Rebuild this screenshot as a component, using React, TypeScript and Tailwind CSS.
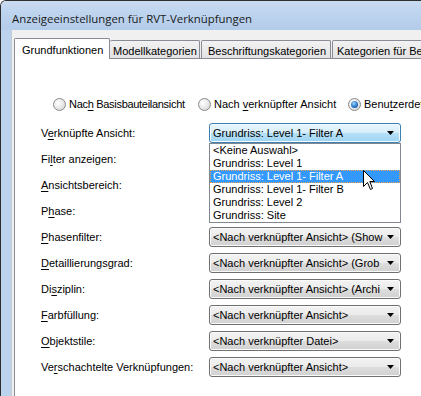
import React from 'react';

const ui = { fontFamily: '"Liberation Sans", Arial, sans-serif' };

function Mn({ children }: { children: React.ReactNode }) {
  return <span className="underline underline-offset-[2px] decoration-[1px]">{children}</span>;
}

function Arrow() {
  return (
    <svg width="7" height="4" viewBox="0 0 7 4" className="shrink-0">
      <path d="M0 0h7L3.5 4z" fill="#000" />
    </svg>
  );
}

function Radio({ checked = false }: { checked?: boolean }) {
  return (
    <div className="w-[13px] h-[13px] rounded-full border border-[#8a8a8a] bg-[radial-gradient(circle_at_35%_35%,#ffffff_0%,#e6e6e6_55%,#c8c8c8_100%)] flex items-center justify-center shrink-0">
      {checked && (
        <div className="w-[7px] h-[7px] rounded-full bg-[radial-gradient(circle_at_40%_35%,#9fd4ff_0%,#2b78c8_55%,#0d3f7a_100%)]" />
      )}
    </div>
  );
}

function Combo({ text }: { text: string }) {
  return (
    <div className="w-[192px] h-[20px] rounded-[3px] border border-[#707070] bg-[linear-gradient(#f3f3f3_0%,#ebebeb_48%,#dddddd_52%,#d0d0d0_100%)] shadow-[inset_0_0_0_1px_#fbfbfb] flex items-center pl-[3px] pr-[6px]">
      <span className="flex-1 whitespace-nowrap overflow-hidden">{text}</span>
      <Arrow />
    </div>
  );
}

const listItems = [
  '<Keine Auswahl>',
  'Grundriss: Level 1',
  'Grundriss: Level 1- Filter A',
  'Grundriss: Level 1- Filter B',
  'Grundriss: Level 2',
  'Grundriss: Site',
];

function OpenCombo() {
  return (
    <div className="relative">
      <div className="w-[192px] h-[20px] rounded-[3px] border border-[#3c7fb1] bg-[linear-gradient(#e9f6fd_0%,#d6eefb_48%,#b6e0f7_52%,#9dd4f3_100%)] shadow-[inset_0_0_0_1px_#f4fbff] flex items-center pl-[3px] pr-[6px]">
        <span className="flex-1 whitespace-nowrap overflow-hidden">Grundriss: Level 1- Filter A</span>
        <Arrow />
      </div>
      <div className="absolute left-0 top-[20px] w-[192px] border border-[#828790] bg-white z-10">
        {listItems.map((t, i) => (
          <div
            key={t}
            className={
              i === 2
                ? 'h-[13px] leading-[11px] px-[2px] bg-[#3399ff] text-white border border-dotted border-[#f0a050] whitespace-nowrap'
                : 'h-[13px] leading-[13px] px-[3px] whitespace-nowrap'
            }
          >
            {t}
          </div>
        ))}
      </div>
    </div>
  );
}

const rows: { label: React.ReactNode; value?: string; open?: boolean }[] = [
  { label: <>V<Mn>e</Mn>rknüpfte Ansicht:</>, open: true },
  { label: <>Fi<Mn>l</Mn>ter anzeigen:</> },
  { label: <><Mn>A</Mn>nsichtsbereich:</> },
  { label: <>P<Mn>h</Mn>ase:</> },
  { label: <><Mn>P</Mn>hasenfilter:</>, value: '<Nach verknüpfter Ansicht> (Show' },
  { label: <><Mn>D</Mn>etaillierungsgrad:</>, value: '<Nach verknüpfter Ansicht> (Grob' },
  { label: <>Di<Mn>s</Mn>ziplin:</>, value: '<Nach verknüpfter Ansicht> (Archi' },
  { label: <><Mn>F</Mn>arbfüllung:</>, value: '<Nach verknüpfter Ansicht>' },
  { label: <><Mn>O</Mn>bjektstile:</>, value: '<Nach verknüpfter Datei>' },
  { label: <>Ve<Mn>r</Mn>schachtelte Verknüpfungen:</>, value: '<Nach verknüpfter Ansicht>' },
];

export default function App() {
  return (
    <div className="w-[421px] h-[396px] bg-white overflow-hidden relative text-[11px] text-black" style={ui}>
      <div className="flex flex-col h-full rounded-tl-[6px] border-t border-l border-[#2e2e2e] overflow-hidden">
        {/* title bar */}
        <div className="h-[29px] shrink-0 bg-[linear-gradient(#c8dbf1_0%,#bcd3ee_50%,#b3cce9_100%)] flex items-center pl-[11px] pt-[6px]">
          <span className="text-[11.4px] text-[#1a1a1a] whitespace-nowrap" style={{ fontFamily: '"Open Sans", "Noto Sans", sans-serif' }}>
            Anzeigeeinstellungen für RVT-Verknüpfungen
          </span>
        </div>
        <div className="flex flex-1 min-h-0">
          <div className="w-[11px] shrink-0 bg-[#bcd3ee] border-r border-[#c5ccd4]" />
          <div className="flex-1 bg-[#f0f0f0] pl-[2px] pt-[7px] flex flex-col min-h-0">
            {/* tabs */}
            <div className="flex items-end h-[21px] shrink-0 relative z-10">
              <div className="w-[96px] h-[21px] -mb-px bg-white border-l border-t border-r border-[#898c95] rounded-t-[2px] pl-[7px] pt-[3px] whitespace-nowrap">
                Grundfunktionen
              </div>
              <div className="w-[90px] h-[18px] bg-[linear-gradient(#f2f2f2,#e3e3e3)] border-t border-r border-[#898c95] rounded-t-[2px] pl-[3px] pt-[2px] whitespace-nowrap">
                Modellkategorien
              </div>
              <div className="w-[130px] h-[18px] ml-px bg-[linear-gradient(#f2f2f2,#e3e3e3)] border-l border-t border-r border-[#898c95] rounded-t-[2px] pl-[6px] pt-[2px] whitespace-nowrap">
                Beschriftungskategorien
              </div>
              <div className="w-[120px] h-[18px] ml-px bg-[linear-gradient(#f2f2f2,#e3e3e3)] border-l border-t border-r border-[#898c95] rounded-t-[2px] pl-[4px] pt-[2px] whitespace-nowrap overflow-hidden">
                Kategorien für Bemaßung
              </div>
            </div>
            {/* panel */}
            <div className="flex-1 bg-white border-l border-t border-[#898c95] pt-[39px]">
              <div className="flex items-center h-[13px] pl-[38px] whitespace-nowrap">
                <div className="w-[145px] flex items-center gap-[3px]">
                  <Radio />
                  <span className="tracking-[-0.3px]">Nac<Mn>h</Mn> Basisbauteilansicht</span>
                </div>
                <div className="w-[150px] flex items-center gap-[3px]">
                  <Radio />
                  <span>Nach <Mn>v</Mn>erknüpfter Ansicht</span>
                </div>
                <div className="flex items-center gap-[3px]">
                  <Radio checked />
                  <span>Benu<Mn>t</Mn>zerdefiniert</span>
                </div>
              </div>
              <div className="pt-[12px] pl-[26px] flex flex-col gap-[6px]">
                {rows.map((r, i) => (
                  <div key={i} className="flex items-center h-[20px]">
                    <div className="w-[168px] whitespace-nowrap">{r.label}</div>
                    {r.open ? <OpenCombo /> : r.value ? <Combo text={r.value} /> : <div className="w-[192px]" />}
                  </div>
                ))}
              </div>
            </div>
          </div>
        </div>
      </div>
      {/* mouse pointer */}
      <svg className="absolute left-[363px] top-[170px] z-20" width="13" height="21" viewBox="0 0 13 21">
        <path d="M0.5 0.5V16.5L4.5 12.5L7.5 19.5L9.5 18.5L6.8 11.5H11.5Z" fill="#fff" stroke="#000" strokeWidth="1" strokeLinejoin="miter" />
      </svg>
    </div>
  );
}
